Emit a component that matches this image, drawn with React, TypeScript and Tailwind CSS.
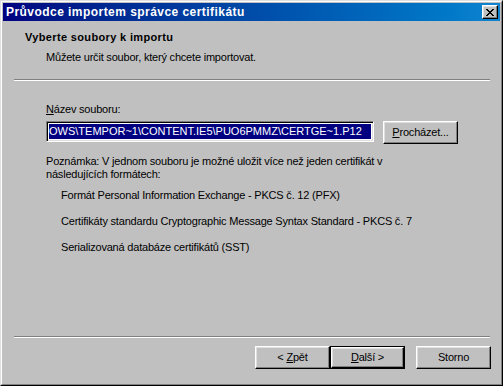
import React from 'react';

const font = "font-['Liberation_Sans',Arial,sans-serif]";

const Acc = ({ children }: { children: React.ReactNode }) => <span className="underline underline-offset-[1px]">{children}</span>;

const Button = ({ children, isDefault = false, className = '' }: { children: React.ReactNode; isDefault?: boolean; className?: string }) => {
  const face = (
    <div className="h-full w-full border border-t-white border-l-white border-r-black border-b-black shadow-[inset_-1px_-1px_#808080,inset_1px_1px_#dfdfdf] flex items-center justify-center text-[11px] text-black leading-none">
      <span className="whitespace-pre">{children}</span>
    </div>
  );
  return (
    <div className={`w-[75px] h-[23px] ${className}`}>
      {isDefault ? <div className="h-full w-full border border-black">{face}</div> : face}
    </div>
  );
};

const Separator = ({ className = '' }: { className?: string }) => (
  <div className={`h-[2px] border-t border-t-[#808080] border-b border-b-white ${className}`} />
);

export default function App() {
  const formats = [
    'Formát Personal Information Exchange - PKCS č. 12 (PFX)',
    'Certifikáty standardu Cryptographic Message Syntax Standard - PKCS č. 7',
    'Serializovaná databáze certifikátů (SST)',
  ];

  return (
    <div className={`w-[503px] h-[386px] ${font} text-[11px] leading-[13px] tracking-[-0.2px] text-black`}>
      <div className="h-full w-full border border-t-[#dfdfdf] border-l-[#dfdfdf] border-r-black border-b-black">
        <div className="h-full w-full border border-t-white border-l-white border-r-[#808080] border-b-[#808080] bg-[#c0c0c0] p-px flex flex-col">
          {/* Title bar */}
          <div className="h-[18px] flex items-center justify-between bg-gradient-to-r from-[#000080] to-[#1084d0] pl-[3px] pr-[2px]">
            <span className="text-white font-bold text-[12px] tracking-[0.45px]">Průvodce importem správce certifikátu</span>
            <div className="w-[16px] h-[14px] border border-t-white border-l-white border-r-black border-b-black shadow-[inset_-1px_-1px_#808080,inset_1px_1px_#dfdfdf] bg-[#c0c0c0] flex items-center justify-center">
              <svg width="8" height="7" viewBox="0 0 8 7" shapeRendering="crispEdges">
                <path d="M0 0h2v1h-2zM6 0h2v1h-2zM1 1h2v1h-2zM5 1h2v1h-2zM2 2h4v1h-4zM3 3h2v1h-2zM2 4h4v1h-4zM1 5h2v1h-2zM5 5h2v1h-2zM0 6h2v1h-2zM6 6h2v1h-2z" fill="#000" />
              </svg>
            </div>
          </div>

          {/* Header */}
          <div className="pt-[10px]">
            <div className="pl-[22px] font-bold tracking-[0.35px]">Vyberte soubory k importu</div>
            <div className="pl-[43px] mt-[7px]">Můžete určit soubor, který chcete importovat.</div>
            <Separator className="ml-[11px] w-[476px] mt-[15px]" />
          </div>

          {/* Body */}
          <div className="pl-[43px] pt-[22px]">
            <div>
              <Acc>N</Acc>ázev souboru:
            </div>
            <div className="flex items-start gap-[9px] mt-[5px]">
              <div className="w-[328px] h-[21px] bg-white border border-t-[#808080] border-l-[#808080] border-b-white border-r-white shadow-[inset_1px_1px_#000,inset_-1px_-1px_#dfdfdf] flex items-center overflow-hidden px-[2px]">
                <span className="bg-[#000080] text-white whitespace-nowrap leading-[15px] w-full tracking-normal">OWS\TEMPOR~1\CONTENT.IE5\PUO6PMMZ\CERTGE~1.P12</span>
              </div>
              <Button>
                <Acc>P</Acc>rocházet...
              </Button>
            </div>
            <div className="mt-[11px] w-[360px]">
              Poznámka: V jednom souboru je možné uložit více než jeden certifikát v následujících formátech:
            </div>
            <div className="pl-[15px] mt-[8px] flex flex-col gap-[13px]">
              {formats.map((f) => (
                <div key={f}>{f}</div>
              ))}
            </div>
          </div>

          {/* Footer */}
          <div className="mt-auto pb-[14px]">
            <Separator className="ml-[11px] w-[476px]" />
            <div className="flex justify-end mt-[8px] pr-[9px]">
              <Button>
                &lt; <Acc>Z</Acc>pět
              </Button>
              <Button isDefault>
                <Acc>D</Acc>alší &gt;
              </Button>
              <Button className="ml-[11px]">Storno</Button>
            </div>
          </div>
        </div>
      </div>
    </div>
  );
}
